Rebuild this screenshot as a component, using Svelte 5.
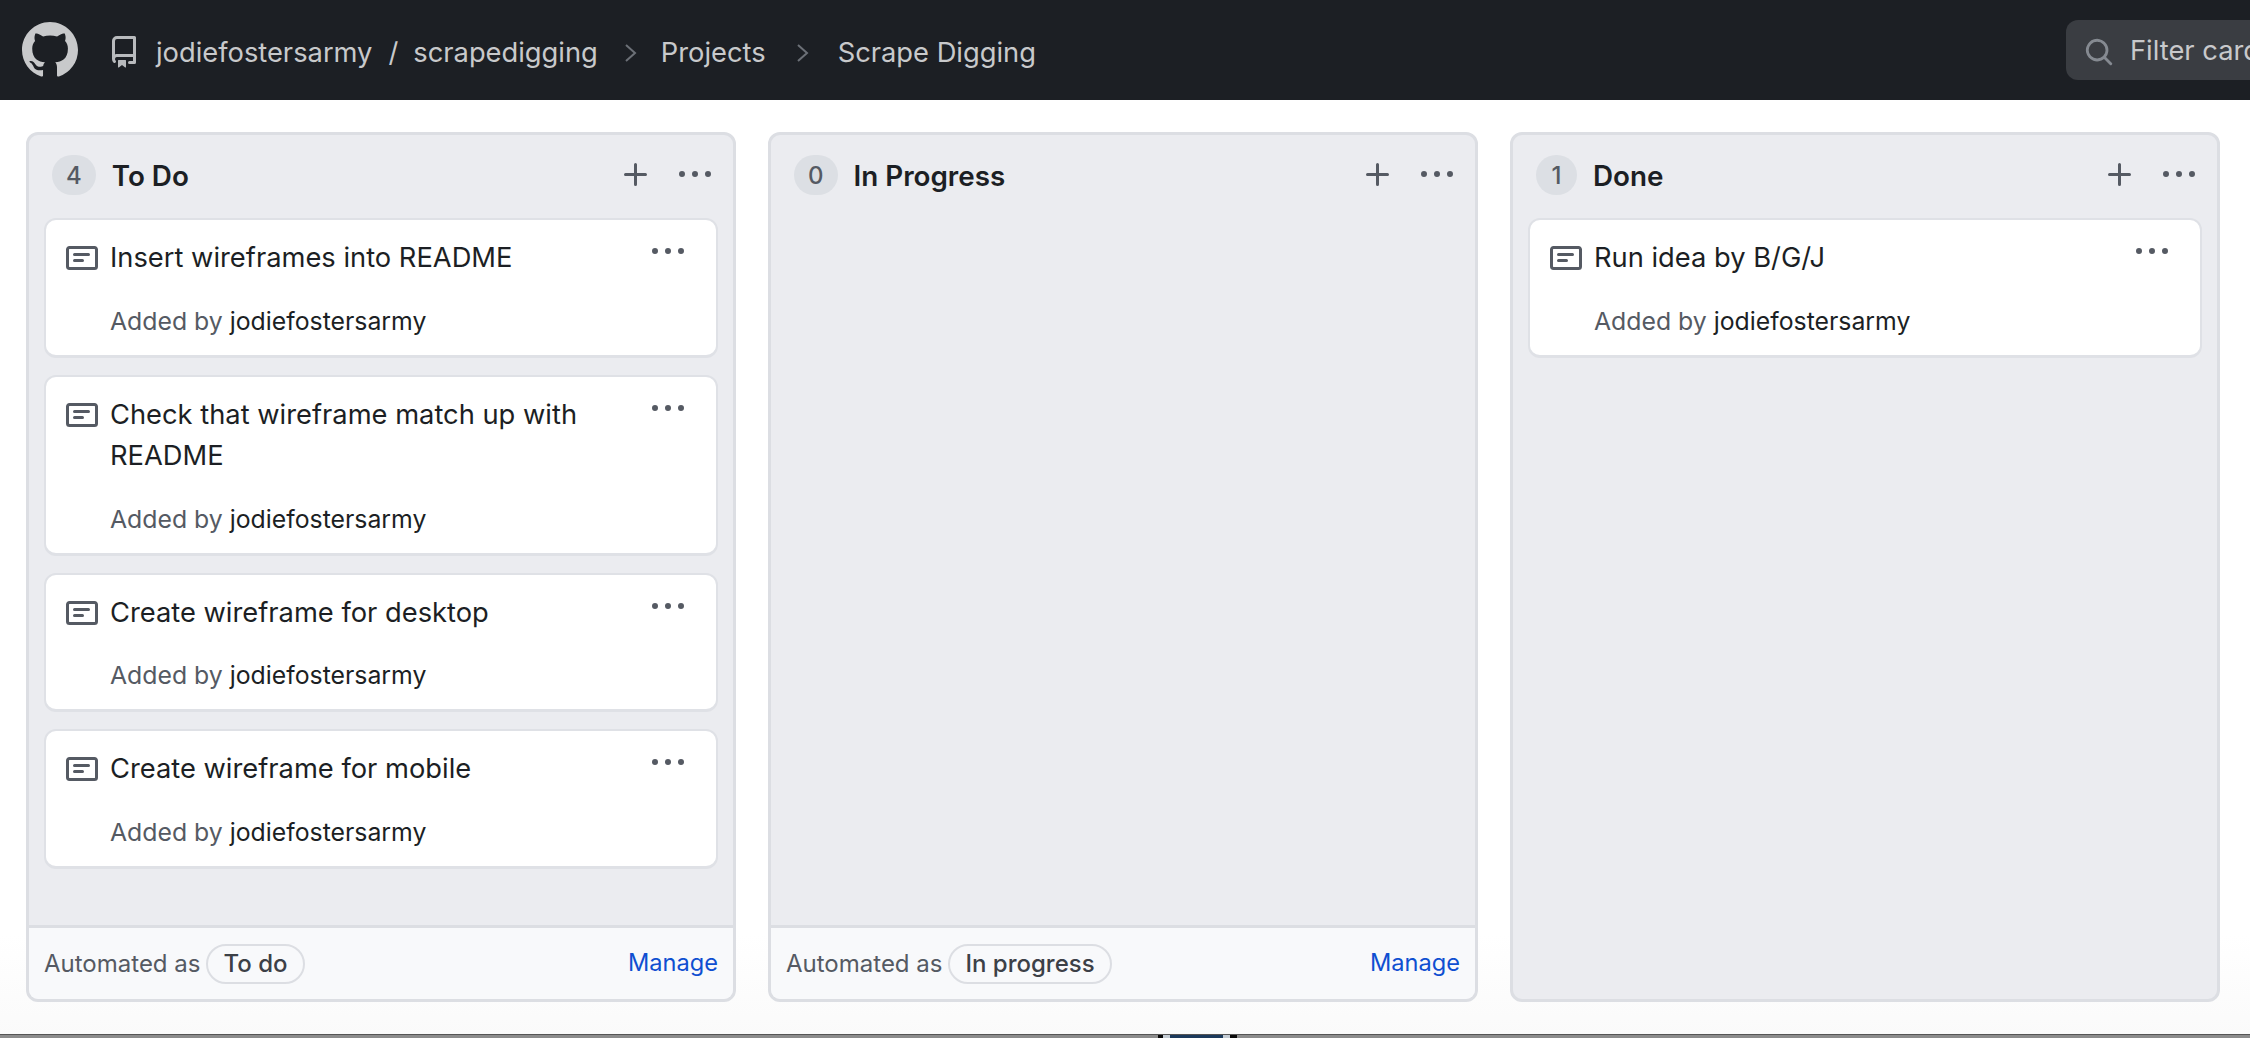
<script>
  const columns = [
    {
      title: "To Do",
      automation: "To do",
      cards: [
        { id: 1, text: "Insert wireframes into README" },
        { id: 2, text: "Check that wireframe match up with README" },
        { id: 3, text: "Create wireframe for desktop" },
        { id: 4, text: "Create wireframe for mobile" },
      ],
    },
    { title: "In Progress", automation: "In progress", cards: [] },
    { title: "Done", automation: null, cards: [{ id: 5, text: "Run idea by B/G/J" }] },
  ];

  const kebab =
    "M8 9a1.5 1.5 0 100-3 1.5 1.5 0 000 3zM1.5 9a1.5 1.5 0 100-3 1.5 1.5 0 000 3zm13 0a1.5 1.5 0 100-3 1.5 1.5 0 000 3z";
</script>

<div class="page">
  <header class="topbar">
    <svg class="logo" viewBox="0 0 16 16" aria-hidden="true">
      <path d="M8 0C3.58 0 0 3.58 0 8c0 3.54 2.29 6.53 5.47 7.59.4.07.55-.17.55-.38 0-.19-.01-.82-.01-1.49-2.01.37-2.53-.49-2.69-.94-.09-.23-.48-.94-.82-1.13-.28-.15-.68-.52-.01-.53.63-.01 1.08.58 1.23.82.72 1.21 1.87.87 2.33.66.07-.52.28-.87.51-1.07-1.78-.2-3.64-.89-3.64-3.95 0-.87.31-1.59.82-2.15-.08-.2-.36-1.02.08-2.12 0 0 .67-.21 2.2.82.64-.18 1.32-.27 2-.27.68 0 1.36.09 2 .27 1.53-1.04 2.2-.82 2.2-.82.44 1.1.16 1.92.08 2.12.51.56.82 1.27.82 2.15 0 3.07-1.87 3.75-3.65 3.95.29.25.54.73.54 1.48 0 1.07-.01 1.93-.01 2.2 0 .21.15.46.55.38A8.013 8.013 0 0016 8c0-4.42-3.58-8-8-8z" />
    </svg>
    <svg class="repo" viewBox="0 0 16 16" aria-hidden="true">
      <path d="M2 2.5A2.5 2.5 0 014.5 0h8.75a.75.75 0 01.75.75v12.5a.75.75 0 01-.75.75h-2.5a.75.75 0 110-1.5h1.75v-2h-8a1 1 0 00-.714 1.7.75.75 0 01-1.072 1.05A2.495 2.495 0 012 11.5v-9zm10.5-1V9h-8c-.356 0-.694.074-1 .208V2.5a1 1 0 011-1h8zM5 12.25v3.25a.25.25 0 00.4.2l1.45-1.087a.25.25 0 01.3 0L8.6 15.7a.25.25 0 00.4-.2v-3.25a.25.25 0 00-.25-.25h-3.5a.25.25 0 00-.25.25z" />
    </svg>
    <nav class="crumbs">
      <span>jodiefostersarmy</span>
      <span class="slash">/</span>
      <span>scrapedigging</span>
      <svg class="chevron" viewBox="0 0 12 18" aria-hidden="true"><polyline points="1,1 10,9 1,17" /></svg>
      <span>Projects</span>
      <svg class="chevron wide" viewBox="0 0 12 18" aria-hidden="true"><polyline points="1,1 10,9 1,17" /></svg>
      <span>Scrape Digging</span>
    </nav>
    <div class="filter">
      <svg viewBox="0 0 16 16" aria-hidden="true">
        <path d="M11.5 7a4.499 4.499 0 11-8.998 0A4.499 4.499 0 0111.5 7zm-.82 4.74a6 6 0 111.06-1.06l3.04 3.04a.75.75 0 11-1.06 1.06l-3.04-3.04z" />
      </svg>
      <span>Filter cards</span>
    </div>
  </header>

  <main class="board">
    {#each columns as col}
      <section class="column">
        <div class="col-head">
          <span class="count">{col.cards.length}</span>
          <h2>{col.title}</h2>
          <svg class="plus" viewBox="0 0 16 16" aria-hidden="true">
            <path d="M7.75 2a.75.75 0 01.75.75V7h4.25a.75.75 0 110 1.5H8.5v4.25a.75.75 0 11-1.5 0V8.5H2.75a.75.75 0 010-1.5H7V2.75A.75.75 0 017.75 2z" />
          </svg>
          <svg class="dots" viewBox="0 0 16 16" aria-hidden="true"><path d={kebab} /></svg>
        </div>

        <div class="cards">
          {#each col.cards as card (card.id)}
            <article class="card">
              <svg class="note" viewBox="0 0 16 16" aria-hidden="true">
                <path d="M0 3.75C0 2.784.784 2 1.75 2h12.5c.966 0 1.75.784 1.75 1.75v8.5A1.75 1.75 0 0114.25 14H1.75A1.75 1.75 0 010 12.25Zm1.75-.25a.25.25 0 00-.25.25v8.5c0 .138.112.25.25.25h12.5a.25.25 0 00.25-.25v-8.5a.25.25 0 00-.25-.25ZM3.5 6.25a.75.75 0 01.75-.75h7a.75.75 0 010 1.5h-7a.75.75 0 01-.75-.75Zm.75 2.25h4a.75.75 0 010 1.5h-4a.75.75 0 010-1.5Z" />
              </svg>
              <div class="card-body">
                <p class="card-text">{card.text}</p>
                <p class="meta">Added by <span>jodiefostersarmy</span></p>
              </div>
              <svg class="dots" viewBox="0 0 16 16" aria-hidden="true"><path d={kebab} /></svg>
            </article>
          {/each}
        </div>

        {#if col.automation}
          <footer class="col-foot">
            <span class="auto">Automated as</span>
            <span class="pill">{col.automation}</span>
            <span class="manage">Manage</span>
          </footer>
        {/if}
      </section>
    {/each}
  </main>

  <div class="edge"></div>
</div>

<style>
  :global(body) {
    margin: 0;
    overflow: hidden;
    background: #fff;
  }

  .page {
    display: flex;
    flex-direction: column;
    height: 1038px;
    overflow: hidden;
    font-family: Inter, "Liberation Sans", sans-serif;
    background: linear-gradient(#fff 90%, #fafafa);
  }

  p,
  h2 {
    margin: 0;
  }

  svg {
    flex: none;
    fill: currentColor;
    fill-rule: evenodd;
  }

  /* Top bar */
  .topbar {
    display: flex;
    align-items: center;
    flex: none;
    height: 100px;
    padding-left: 22px;
    background: #1c1f24;
    color: #c8c9cb;
    font-size: 27.3px;
  }

  .logo {
    width: 56px;
    height: 56px;
  }

  .repo {
    width: 32px;
    height: 32px;
    margin: 4px 0 0 30px;
    color: #b8babd;
  }

  .crumbs {
    display: flex;
    align-items: center;
    margin: 5px 0 0 16px;
    white-space: nowrap;
  }

  .slash {
    margin: 0 15px 0 16px;
  }

  .chevron {
    width: 12px;
    height: 18px;
    margin: 0 24px 0 27px;
    fill: none;
    stroke: #6c7077;
    stroke-width: 2;
  }

  .chevron.wide {
    margin: 0 29px 0 31px;
  }

  .filter {
    display: flex;
    align-items: center;
    gap: 16px;
    height: 60px;
    width: 300px;
    margin-left: auto;
    margin-right: -132px;
    padding-left: 16px;
    border-radius: 12px;
    background: #3a3d42;
    white-space: nowrap;
  }

  .filter svg {
    width: 30px;
    height: 30px;
    color: #858a91;
    margin: 4px 0 0 2px;
  }

  /* Board */
  .board {
    display: grid;
    grid-template-columns: repeat(3, 710px);
    gap: 32px;
    flex: 1;
    min-height: 0;
    padding: 32px 0 32px 26px;
  }

  .column {
    display: flex;
    flex-direction: column;
    min-height: 0;
    border: 3px solid #dcdee3;
    border-radius: 12px;
    background: #ebecf0;
    overflow: hidden;
  }

  .col-head {
    display: flex;
    align-items: center;
    flex: none;
    height: 83px;
    padding: 0 22px 0 23px;
    color: #555a63;
  }

  .count {
    display: flex;
    align-items: center;
    justify-content: center;
    box-sizing: border-box;
    min-width: 41px;
    height: 40px;
    padding: 0 14px;
    border-radius: 20px;
    background: #dcdfe4;
    font-size: 24px;
    font-weight: 500;
    color: #555a63;
    margin-top: -3px;
  }

  h2 {
    flex: 1;
    margin: -2px 0 0 16px;
    font-size: 27.8px;
    font-weight: 600;
    color: #1c1f24;
  }

  .plus {
    width: 32px;
    height: 32px;
    margin: -3px 27px 0 0;
  }

  .col-head .dots {
    width: 32px;
    height: 32px;
    margin-top: -3px;
  }

  .cards {
    display: flex;
    flex-direction: column;
    gap: 17px;
    flex: 1;
    padding: 0 15px;
  }

  .card {
    display: flex;
    padding: 17px 32px 16px 20px;
    border: 2px solid #dfe1e6;
    border-bottom-width: 3px;
    border-radius: 12px;
    background: #fff;
  }

  .note {
    width: 32px;
    height: 32px;
    margin-top: 5px;
    color: #555a63;
  }

  .card-body {
    flex: 1;
    margin-left: 12px;
  }

  .card-text {
    font-size: 27.3px;
    line-height: 41.5px;
    color: #1c1f24;
  }

  .meta {
    margin-top: 24px;
    font-size: 24.8px;
    line-height: 36px;
    color: #555a63;
  }

  .meta span {
    color: #1c1f24;
  }

  .card .dots {
    width: 32px;
    height: 32px;
    color: #555a63;
    margin-top: -1px;
  }

  .col-foot {
    display: flex;
    align-items: center;
    flex: none;
    height: 71px;
    padding: 0 15px;
    border-top: 3px solid #dcdee3;
    background: #f8f9fb;
    font-size: 24px;
    color: #555a63;
  }

  .pill {
    margin-left: 6px;
    padding: 0 15px;
    height: 40px;
    line-height: 36px;
    box-sizing: border-box;
    border: 2px solid #dcdee3;
    border-radius: 20px;
    font-weight: 500;
    color: #3c4047;
  }

  .manage {
    margin-left: auto;
    color: #0f4fd1;
    font-size: 23.6px;
    margin-top: -3px;
  }

  /* sliver of the desktop showing under the window */
  .edge {
    flex: none;
    height: 3px;
    border-top: 1px solid #555;
    background: linear-gradient(
      90deg,
      #8c8c8c 1158px,
      #0a0a0a 1158px,
      #0a0a0a 1163px,
      #c4ccd4 1163px,
      #c4ccd4 1170px,
      #1c3a5c 1170px,
      #1c3a5c 1223px,
      #c4ccd4 1223px,
      #c4ccd4 1230px,
      #0a0a0a 1230px,
      #0a0a0a 1237px,
      #8c8c8c 1237px
    );
  }
</style>
